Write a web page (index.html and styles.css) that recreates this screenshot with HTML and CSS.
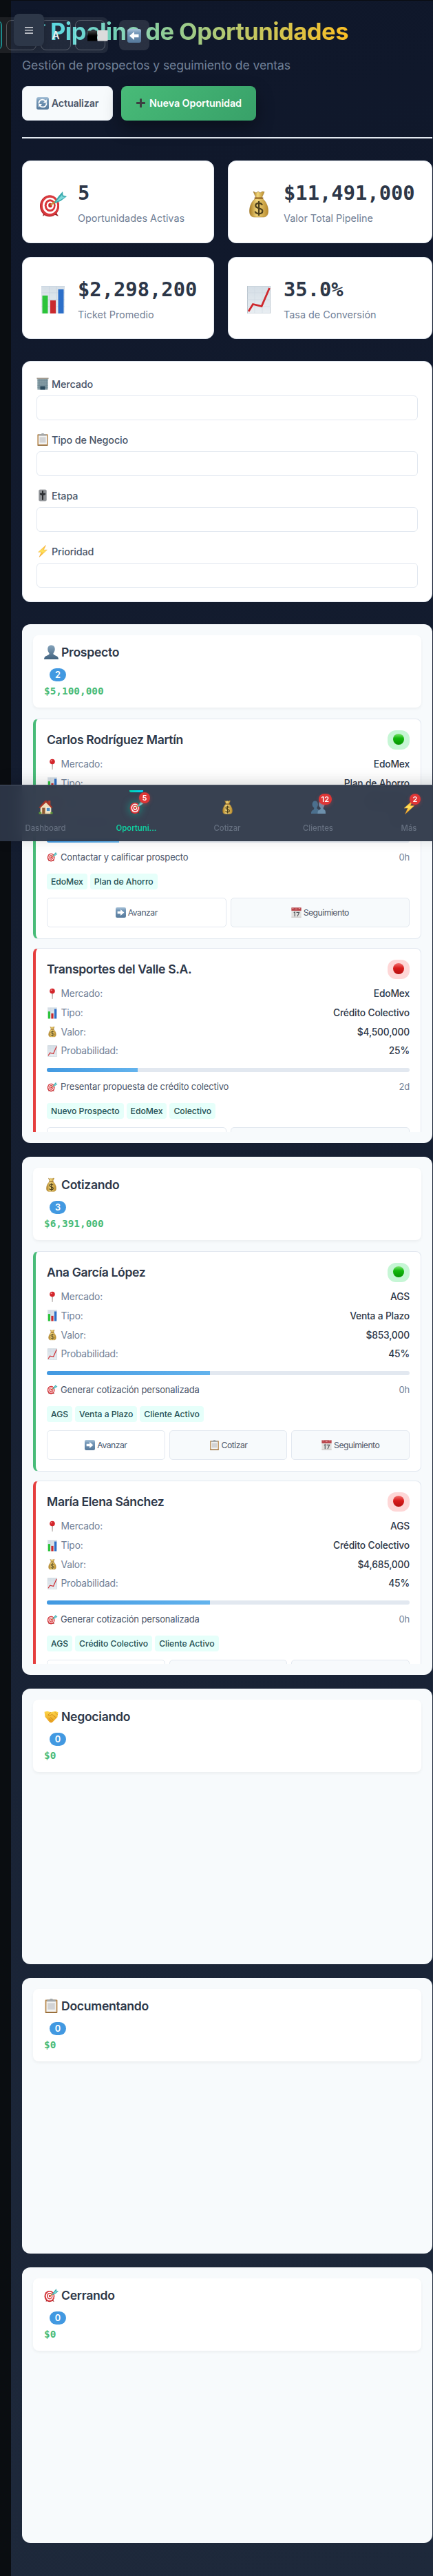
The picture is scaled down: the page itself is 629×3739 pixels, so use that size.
FILE: index.html
```html
<!DOCTYPE html>
<html lang="es">
<head>
<meta charset="utf-8">
<title>Pipeline de Oportunidades</title>
<link rel="stylesheet" href="styles.css">
</head>
<body>
<svg width="0" height="0" class="defs" aria-hidden="true">
  <defs>
    <linearGradient id="g-gold" x1="0" x2="1"><stop offset="0" stop-color="#a87b22"/><stop offset=".4" stop-color="#f3d77c"/><stop offset="1" stop-color="#b88a2c"/></linearGradient>
    <linearGradient id="g-key" x1="0" y1="0" x2="0" y2="1"><stop offset="0" stop-color="#a9c3d9"/><stop offset=".3" stop-color="#7598b8"/><stop offset="1" stop-color="#56799b"/></linearGradient>
    <linearGradient id="g-man" x1="0" y1="0" x2="0" y2="1"><stop offset="0" stop-color="#85a3bb"/><stop offset="1" stop-color="#41627f"/></linearGradient>
    <linearGradient id="g-paper" x1="0" y1="0" x2="0" y2="1"><stop offset="0" stop-color="#d5dee6"/><stop offset="1" stop-color="#e9eef2"/></linearGradient>
    <linearGradient id="g-bolt" x1="0" y1="0" x2="0" y2="1"><stop offset="0" stop-color="#ffb11f"/><stop offset=".5" stop-color="#ffe55c"/><stop offset="1" stop-color="#f79a1c"/></linearGradient>
    <linearGradient id="g-hand" x1="0" y1="0" x2="0" y2="1"><stop offset="0" stop-color="#ffd84a"/><stop offset="1" stop-color="#e69c1b"/></linearGradient>
    <linearGradient id="g-black" x1="0" y1="0" x2="0" y2="1"><stop offset="0" stop-color="#444"/><stop offset=".5" stop-color="#000"/></linearGradient>
  </defs>
  <symbol id="target" viewBox="0 0 40 40">
    <path d="M7 31l-2 7 6-4zM25 33l3 5-7-3z" fill="#8f1d20"/>
    <ellipse cx="15" cy="23" rx="14" ry="15.5" fill="#b3242a"/><ellipse cx="15.5" cy="22.5" rx="13.5" ry="15" fill="#da3a3e"/>
    <ellipse cx="15.5" cy="22.5" rx="10.6" ry="11.8" fill="#fff"/><ellipse cx="15.7" cy="22.3" rx="8" ry="9" fill="#d9363b"/>
    <ellipse cx="15.9" cy="22.2" rx="5.2" ry="6" fill="#fff"/><ellipse cx="16" cy="22" rx="2.8" ry="3.3" fill="#c9282e"/>
    <path d="M16.500 22L25 15" stroke="#c79a34" stroke-width="2.200"/>
    <path d="M22 18l5.500-8.500L34 2l.6 5.400L40 9l-8.500 6.500-8 3.500z" fill="#3aa9ad"/><path d="M24 17l9-10 .8 2.500 4.200.3-8 4.700z" fill="#7fdadb"/>
  </symbol>
  <symbol id="bag" viewBox="0 0 40 40">
    <path d="M12 2l4 2 3-2 3 2 3-2 3 .5-4 9h-8z" fill="url(#g-gold)" stroke="#9b732a" stroke-width=".6"/>
    <path d="M15 12h10c5 4 8.500 11 8.500 18 0 6-2 8.500-6.500 9H13c-4.500-.5-6.500-3-6.500-9 0-7 3.500-14 8.500-18z" fill="url(#g-gold)" stroke="#a57c2a" stroke-width=".6"/>
    <path d="M14.500 11.500h11" stroke="#8a5a1d" stroke-width="2.200" stroke-linecap="round"/>
    <path d="M25 21.500c-1-2-2.700-2.700-5-2.700-2.800 0-4.700 1.500-4.700 3.800 0 5 10 2.600 10 7.600 0 2.500-2.200 4-5.200 4-2.800 0-4.800-1.200-5.500-3.300M20 16v21" fill="none" stroke="#4d401c" stroke-width="2.300"/>
  </symbol>
  <symbol id="chart" viewBox="0 0 40 40">
    <rect x="3" width="34" height="40" fill="url(#g-paper)"/><path d="M3 .5h34M14.500 0v40M25.500 0v40M3 10h34M3 20h34M3 30h34" stroke="#c6d3df" stroke-width=".7"/>
    <rect x="4.500" y="14" width="8" height="26" fill="#2cc43b"/><rect x="16" y="21" width="8" height="19" fill="#c9292d"/><rect x="27.500" y="5" width="8" height="35" fill="#2c6fc9"/>
  </symbol>
  <symbol id="trend" viewBox="0 0 40 40">
    <rect x="3" width="34" height="40" fill="url(#g-paper)"/><path d="M3.500 0v40h33V0z" fill="none" stroke="#bcc7d0"/><path d="M14 0v40M25 0v40M3 10h34M3 20h34M3 30h34" stroke="#cdd8e1" stroke-width=".6"/>
    <path d="M5 37l6.500-10.500L24 29.500 35.500 3" fill="none" stroke="#ce282d" stroke-width="2.800"/>
  </symbol>
  <symbol id="building" viewBox="0 0 40 40">
    <rect x="3" y="3" width="34" height="36" fill="#8da3ab"/><rect x="1" y="1" width="38" height="4" fill="#9d968b"/>
    <path d="M3 9.500h34M3 15h34M3 20.500h34M3 26h34M3 31.500h34M9 5v34M15 5v34M21 5v34M27 5v34M33 5v34" stroke="#66828f" stroke-width="1.400"/>
    <rect x="12" y="28" width="16" height="11" fill="#2d4b5e"/>
  </symbol>
  <symbol id="clipboard" viewBox="0 0 40 40">
    <rect x="3" y="3" width="34" height="37" rx="2" fill="#b88b52"/><rect x="6.500" y="7" width="27" height="29" fill="#f3f3f2"/><rect x="10" y="12" width="20" height="18" fill="#d2d3d5"/>
    <path d="M8 3h7c0-4 10-4 10 0h7v5H8z" fill="#a4a8aa"/><path d="M4 38.500h32" stroke="#815a2c" stroke-width="2"/>
  </symbol>
  <symbol id="slider" viewBox="0 0 40 40">
    <rect x="7" y="1" width="26" height="38" rx="5" fill="#a1a4a8"/><rect x="9" y="3" width="22" height="34" rx="3" fill="#8d9094"/>
    <path d="M20 5v30" stroke="#1d1f22" stroke-width="4"/><path d="M11 13h18v4l-5 3h-8l-5-3z" fill="#2d3034"/>
  </symbol>
  <symbol id="bolt" viewBox="0 0 40 40"><path d="M30 1L6 23h10l-7 16 25-23H23z" fill="url(#g-bolt)" stroke="#eda128" stroke-width="1"/></symbol>
  <symbol id="person" viewBox="0 0 40 40"><path d="M20 1c6 0 10 4 10 11 0 6-3 9-4.500 12 0 3 2 4 6 5.500 5 2 8 4 8.500 10.500H0c.5-6.500 3.500-8.500 8.500-10.500 4-1.500 6-2.500 6-5.500C13 21 10 18 10 12 10 5 14 1 20 1z" fill="url(#g-man)"/></symbol>
  <symbol id="people" viewBox="0 0 40 40">
    <path d="M11 3c5 0 8 4 8 9.500 0 5-2 7.500-3.500 9.500 0 3 5 4 7 7l1 9H0c0-8 3-9 6.500-11 1-.7 2-2 1.500-5C5 20 3 17 3 12.500 3 7 6 3 11 3z" fill="#4b6f8d"/>
    <path d="M29 3c5 0 8 4 8 9.500 0 5-2 7.500-3.500 9.500 0 3 1 4 3 5 3 1.500 3.500 4 3.500 11H18c0-8 2-9.500 5.500-11 2-1 3-2 2.500-5-3-2-5-5-5-9.500C21 7 24 3 29 3z" fill="#6d90ac"/>
  </symbol>
  <symbol id="pin" viewBox="0 0 40 40"><path d="M18.500 16h3.500l-.8 23h-2z" fill="#9a8f8c"/><circle cx="20" cy="10" r="9.500" fill="#d3252b"/><ellipse cx="17" cy="7" rx="3" ry="2.500" fill="#f08a8a"/></symbol>
  <symbol id="key-right" viewBox="0 0 40 40"><rect width="40" height="40" rx="6" fill="url(#g-key)"/><path d="M7 15.500h12V8l14 12-14 12v-7.500H7z" fill="#fff"/></symbol>
  <symbol id="key-left" viewBox="0 0 40 40"><rect width="40" height="40" rx="6" fill="url(#g-key)"/><path d="M33 15.500H20V8L6 20l14 12v-7.500h13z" fill="#fff"/></symbol>
  <symbol id="refresh" viewBox="0 0 40 40"><rect width="40" height="40" rx="6" fill="url(#g-key)"/><path d="M8 21C7 13 13 8 19 8c5 0 8 2 10 5M32 19c1 8-5 13-11 13-5 0-8-2-10-5" fill="none" stroke="#fff" stroke-width="4"/><path d="M33 7v11H22zM7 33V22h11z" fill="#fff"/></symbol>
  <symbol id="plus" viewBox="0 0 40 40"><path d="M16 3h8v13h13v8H24v13h-8V24H3v-8h13z" fill="#3d3f42"/></symbol>
  <symbol id="calendar" viewBox="0 0 40 40"><rect x="1" y="1" width="38" height="38" fill="#e2e1df"/><path d="M1 1h38v12H1z" fill="#b9444a"/><path d="M4 4h5M16 6h7M29 4h6" stroke="#e3a0a2" stroke-width="3"/><path d="M10 21l4-3v17M20 19.500h11L24 35" fill="none" stroke="#54585c" stroke-width="3.200"/><path d="M1 38h38" stroke="#bdbab6" stroke-width="2"/></symbol>
  <symbol id="handshake" viewBox="0 0 40 40"><path d="M1 7l8-2 10 3 12-3 8 3-2 14-12 12c-3 4-7 4-10 1L3 21z" fill="url(#g-hand)"/><path d="M19 8l-8 8c4 3 8 0 11-2l11 9M17 22l8 7M13 25l7 7M30 8l7 7" fill="none" stroke="#c57d16" stroke-width="1.500"/></symbol>
  <symbol id="house" viewBox="0 0 40 40">
    <rect x="27" y="2" width="6" height="12" fill="#b5402f"/><path d="M5 18L20 4l15 14v20H5z" fill="#f0dfbb"/><path d="M1 21L18 2h5l16 19-3 2L20.500 7 4 23z" fill="#a63527"/>
    <rect x="10" y="22" width="8" height="16" fill="#8d5832"/><rect x="22" y="22" width="10" height="9" fill="#4a8fc2" stroke="#fff"/><path d="M1 34h7v5H1zM33 34h6v5h-6z" fill="#5a9a35"/><path d="M4 39h32" stroke="#7d6c55" stroke-width="2"/>
  </symbol>
</svg>

<main class="page">
  <header class="page-header">
    <h1><svg class="i"><use href="#target"/></svg><span>Pipeline de Oportunidades</span></h1>
    <p>Gestión de prospectos y seguimiento de ventas</p>
    <div class="actions">
      <button class="btn light"><svg class="i"><use href="#refresh"/></svg><span>Actualizar</span></button>
      <button class="btn green"><svg class="i"><use href="#plus"/></svg><span>Nueva Oportunidad</span></button>
    </div>
  </header>

  <section class="stats">
    <div class="stat"><svg class="i"><use href="#target"/></svg><div><b>5</b><small>Oportunidades Activas</small></div></div>
    <div class="stat"><svg class="i"><use href="#bag"/></svg><div><b>$11,491,000</b><small>Valor Total Pipeline</small></div></div>
    <div class="stat"><svg class="i"><use href="#chart"/></svg><div><b>$2,298,200</b><small>Ticket Promedio</small></div></div>
    <div class="stat"><svg class="i"><use href="#trend"/></svg><div><b>35.0%</b><small>Tasa de Conversión</small></div></div>
  </section>

  <section class="filters">
    <div class="field"><label><svg class="i"><use href="#building"/></svg>Mercado</label><div class="select"></div></div>
    <div class="field"><label><svg class="i"><use href="#clipboard"/></svg>Tipo de Negocio</label><div class="select"></div></div>
    <div class="field"><label><svg class="i"><use href="#slider"/></svg>Etapa</label><div class="select"></div></div>
    <div class="field"><label><svg class="i"><use href="#bolt"/></svg>Prioridad</label><div class="select"></div></div>
  </section>

  <section class="board">
    <div class="column full">
      <div class="column-head"><h3><svg class="i"><use href="#person"/></svg>Prospecto</h3><span class="count">2</span><div class="amount">$5,100,000</div></div>
      <div class="list">
        <article class="opp low">
          <div class="opp-head"><h4>Carlos Rodríguez Martín</h4><span class="pill"><i></i></span></div>
          <dl>
            <div><dt><svg class="i"><use href="#pin"/></svg>Mercado:</dt><dd>EdoMex</dd></div>
            <div><dt><svg class="i"><use href="#chart"/></svg>Tipo:</dt><dd>Plan de Ahorro</dd></div>
            <div><dt><svg class="i"><use href="#bag"/></svg>Valor:</dt><dd>$600,000</dd></div>
            <div><dt><svg class="i"><use href="#trend"/></svg>Probabilidad:</dt><dd>20%</dd></div>
          </dl>
          <div class="bar"><div style="width:20%"></div></div>
          <div class="next"><span><svg class="i"><use href="#target"/></svg>Contactar y calificar prospecto</span><time>0h</time></div>
          <div class="tags"><span>EdoMex</span><span>Plan de Ahorro</span></div>
          <div class="opp-actions"><button><svg class="i"><use href="#key-right"/></svg>Avanzar</button><button><svg class="i"><use href="#calendar"/></svg>Seguimiento</button></div>
        </article>
        <article class="opp high">
          <div class="opp-head"><h4>Transportes del Valle S.A.</h4><span class="pill"><i></i></span></div>
          <dl>
            <div><dt><svg class="i"><use href="#pin"/></svg>Mercado:</dt><dd>EdoMex</dd></div>
            <div><dt><svg class="i"><use href="#chart"/></svg>Tipo:</dt><dd>Crédito Colectivo</dd></div>
            <div><dt><svg class="i"><use href="#bag"/></svg>Valor:</dt><dd>$4,500,000</dd></div>
            <div><dt><svg class="i"><use href="#trend"/></svg>Probabilidad:</dt><dd>25%</dd></div>
          </dl>
          <div class="bar"><div style="width:25%"></div></div>
          <div class="next"><span><svg class="i"><use href="#target"/></svg>Presentar propuesta de crédito colectivo</span><time>2d</time></div>
          <div class="tags"><span>Nuevo Prospecto</span><span>EdoMex</span><span>Colectivo</span></div>
          <div class="opp-actions"><button></button><button></button></div>
        </article>
      </div>
    </div>

    <div class="column full second">
      <div class="column-head"><h3><svg class="i"><use href="#bag"/></svg>Cotizando</h3><span class="count">3</span><div class="amount">$6,391,000</div></div>
      <div class="list">
        <article class="opp low">
          <div class="opp-head"><h4>Ana García López</h4><span class="pill"><i></i></span></div>
          <dl>
            <div><dt><svg class="i"><use href="#pin"/></svg>Mercado:</dt><dd>AGS</dd></div>
            <div><dt><svg class="i"><use href="#chart"/></svg>Tipo:</dt><dd>Venta a Plazo</dd></div>
            <div><dt><svg class="i"><use href="#bag"/></svg>Valor:</dt><dd>$853,000</dd></div>
            <div><dt><svg class="i"><use href="#trend"/></svg>Probabilidad:</dt><dd>45%</dd></div>
          </dl>
          <div class="bar"><div style="width:45%"></div></div>
          <div class="next"><span><svg class="i"><use href="#target"/></svg>Generar cotización personalizada</span><time>0h</time></div>
          <div class="tags"><span>AGS</span><span>Venta a Plazo</span><span>Cliente Activo</span></div>
          <div class="opp-actions"><button><svg class="i"><use href="#key-right"/></svg>Avanzar</button><button><svg class="i"><use href="#clipboard"/></svg>Cotizar</button><button><svg class="i"><use href="#calendar"/></svg>Seguimiento</button></div>
        </article>
        <article class="opp high">
          <div class="opp-head"><h4>María Elena Sánchez</h4><span class="pill"><i></i></span></div>
          <dl>
            <div><dt><svg class="i"><use href="#pin"/></svg>Mercado:</dt><dd>AGS</dd></div>
            <div><dt><svg class="i"><use href="#chart"/></svg>Tipo:</dt><dd>Crédito Colectivo</dd></div>
            <div><dt><svg class="i"><use href="#bag"/></svg>Valor:</dt><dd>$4,685,000</dd></div>
            <div><dt><svg class="i"><use href="#trend"/></svg>Probabilidad:</dt><dd>45%</dd></div>
          </dl>
          <div class="bar"><div style="width:45%"></div></div>
          <div class="next"><span><svg class="i"><use href="#target"/></svg>Generar cotización personalizada</span><time>0h</time></div>
          <div class="tags"><span>AGS</span><span>Crédito Colectivo</span><span>Cliente Activo</span></div>
          <div class="opp-actions"><button></button><button></button><button></button></div>
        </article>
      </div>
    </div>

    <div class="column"><div class="column-head"><h3><svg class="i"><use href="#handshake"/></svg>Negociando</h3><span class="count">0</span><div class="amount">$0</div></div></div>
    <div class="column"><div class="column-head"><h3><svg class="i"><use href="#clipboard"/></svg>Documentando</h3><span class="count">0</span><div class="amount">$0</div></div></div>
    <div class="column"><div class="column-head"><h3><svg class="i"><use href="#target"/></svg>Cerrando</h3><span class="count">0</span><div class="amount">$0</div></div></div>
  </section>
</main>

<div class="toolbar">
  <span class="tool active"></span><span class="tool"></span><span class="tool">A</span>
  <span class="tool"><svg class="contrast" viewBox="0 0 30 16"><rect width="14" height="15" y=".5" fill="url(#g-black)"/><rect x="14.500" y="0" width="15" height="15.500" rx="1" fill="#dcdcdc"/></svg></span>
</div>
<button class="back"><svg class="i"><use href="#key-left"/></svg></button>
<button class="menu"><svg viewBox="0 0 12 10"><path d="M0 .8h12M0 5h12M0 9.200h12" stroke="#fff" stroke-width="1.200"/></svg></button>

<nav class="tabs">
  <a><svg class="i"><use href="#house"/></svg><span>Dashboard</span></a>
  <a class="on"><svg class="i"><use href="#target"/></svg><em class="up">5</em><span>Oportuni...</span></a>
  <a><svg class="i"><use href="#bag"/></svg><span>Cotizar</span></a>
  <a><svg class="i"><use href="#people"/></svg><em>12</em><span>Clientes</span></a>
  <a><svg class="i"><use href="#bolt"/></svg><em>2</em><span>Más</span></a>
</nav>
</body>
</html>
```
FILE: styles.css
```css
* { box-sizing: border-box; }
body { margin: 0; position: relative; width: 629px; height: 3739px; overflow: hidden; background: #0a0d11; font-family: Inter, "Liberation Sans", sans-serif; color: #2d3748; }
h1, h3, h4, p, dl, dd { margin: 0; }
button { font-family: inherit; border: 0; padding: 0; margin: 0; }
.defs { position: absolute; }
.i { display: block; flex: none; }
.page { margin: 0 0 0 16px; border-top: 1px solid #0a0d11; height: 3739px; padding: 23px 1px 0 16px; background: linear-gradient(170deg, #0f172a, #1e293b); }

.page-header { border-bottom: 2px solid #e2e8f0; padding-bottom: 24px; margin-bottom: 32px; }
.page-header h1 { display: flex; align-items: center; gap: 6px; font-size: 34.600px; line-height: 42px; font-weight: 700; letter-spacing: -.560px; }
.page-header h1 .i { width: 35px; height: 35px; }
.page-header h1 span { background: linear-gradient(90deg, #4dd5df, #fbbf24); -webkit-background-clip: text; background-clip: text; color: transparent; white-space: nowrap; }
.page-header p { margin-top: 14.600px; font-size: 17.600px; line-height: 28px; color: #718096; letter-spacing: -.12px; }
.actions { display: flex; gap: 12px; margin-top: 16.400px; }
.btn { height: 50px; border-radius: 8px; display: flex; align-items: center; justify-content: center; gap: 4px; font-size: 14.400px; font-weight: 600; white-space: nowrap; letter-spacing: -.2px; }
.btn .i { width: 18px; height: 18px; }
.light { width: 132px; background: #f7fafc; color: #4a5568; border: 1px solid #e2e8f0; }
.green { width: 196px; gap: 5px; letter-spacing: -.1px; background: linear-gradient(135deg, #48bb78, #38a169); color: #fff; box-shadow: 0 10px 25px rgba(0, 0, 0, .35); }
.green .i { width: 15px; height: 15px; }

.stats { display: grid; grid-template-columns: 279px 297px; grid-template-rows: 120px 119px; gap: 20px; margin-bottom: 32px; }
.stat { background: #fff; border: 1px solid #e2e8f0; border-radius: 12px; padding: 6px 24px 0; display: flex; align-items: center; gap: 16px; }
.stat .i { width: 40px; height: 40px; }
.stat b { display: block; font: 700 28.800px/35px "DejaVu Sans Mono", monospace; }
.stat small { display: block; margin-top: 7px; font-size: 14.400px; line-height: 23px; color: #718096; white-space: nowrap; }

.filters { height: 350px; background: #fff; border: 1px solid #e2e8f0; border-radius: 12px; padding: 21px 20px; display: flex; flex-direction: column; gap: 22px; margin-bottom: 32px; }
.field { height: 59px; }
.field label { display: flex; align-items: center; gap: 4px; height: 23px; margin-bottom: 5px; font-size: 14.400px; font-weight: 500; letter-spacing: -.14px; color: #4a5568; }
.field label .i { width: 18px; height: 18px; }
.select { height: 36px; border: 1px solid #e2e8f0; border-radius: 6px; background: #fff; }

.board { display: flex; flex-direction: column; gap: 20px; }
.column { height: 400px; padding: 16px; background: #f7fafc; border-radius: 12px; display: flex; flex-direction: column; }
.column.full { height: 753px; }
.column.full.second { height: 752px; }
.column-head { height: 105px; flex: none; background: #fff; border-radius: 8px; padding: 15px 16px 0; box-shadow: 0 2px 4px rgba(0, 0, 0, .05); }
.column-head h3 { display: flex; align-items: center; gap: 4px; font-size: 17.600px; line-height: 20px; height: 20px; font-weight: 600; letter-spacing: -.28px; }
.column-head h3 .i { width: 21px; height: 21px; }
.count { display: flex; align-items: center; justify-content: center; width: 24px; height: 19px; margin: 13px 0 0 8px; border-radius: 10px; background: #4299e1; color: #fff; font-size: 12.800px; font-weight: 600; }
.amount { margin-top: 3px; font: 700 14.400px/22px "DejaVu Sans Mono", monospace; color: #48bb78; }
.list { margin-top: 16px; flex: 1; min-height: 0; overflow: hidden; }

.opp { height: 320.400px; margin-bottom: 12.800px; background: #fff; border: 1px solid #e2e8f0; border-left: 4px solid #48bb78; border-radius: 8px; padding: 16px; }
.opp.high { border-left-color: #e53e3e; }
.opp-head { display: flex; justify-content: space-between; height: 28px; }
.opp h4 { font-size: 17.600px; line-height: 27px; font-weight: 600; letter-spacing: -.35px; }
.pill { width: 32px; height: 28px; border-radius: 12px; background: #c6f6d5; display: flex; justify-content: center; padding-top: 5px; }
.pill i { width: 16px; height: 16px; border-radius: 50%; background: linear-gradient(#7be36f, #12b80c 40%, #079404); }
.high .pill { background: #fed7d7; }
.high .pill i { background: linear-gradient(#f0706e, #d91b1b 45%, #b51212); }
.opp dl { margin-top: 10.300px; display: flex; flex-direction: column; gap: 4.670px; }
.opp dl > div { display: flex; justify-content: space-between; height: 23px; line-height: 23px; font-size: 13.800px; }
.opp dt { display: flex; align-items: center; gap: 4.500px; color: #718096; letter-spacing: -.19px; }
.opp dt .i { width: 16px; height: 17px; margin-top: -1px; }
.opp dd { font-weight: 500; letter-spacing: -.18px; }
.bar { height: 6px; margin-top: 12.400px; background: #e2e8f0; border-radius: 3px; overflow: hidden; }
.bar div { height: 6px; background: linear-gradient(90deg, #4299e1, #63b3ed); }
.next { display: flex; justify-content: space-between; margin-top: 10.300px; height: 22px; line-height: 22px; font-size: 13px; letter-spacing: -.14px; color: #4a5568; }
.next span { display: flex; align-items: center; gap: 4px; }
.next .i { width: 16px; height: 15px; }
.next time { color: #718096; }
.tags { display: flex; gap: 4px; margin-top: 12.700px; }
.tags span { height: 23.300px; line-height: 23px; padding: 0 6px; border-radius: 4px; background: #e6fffa; color: #234e52; font-size: 12.200px; font-weight: 500; letter-spacing: -.04px; white-space: nowrap; }
.opp-actions { display: flex; gap: 6px; margin-top: 11.700px; }
.opp-actions button { flex: 1; height: 43.700px; display: flex; align-items: center; justify-content: center; gap: 3px; border: 1px solid #e2e8f0; border-radius: 5px; background: #f7fafc; color: #4a5568; font-size: 12.200px; letter-spacing: -.5px; }
.opp-actions button:first-child { background: #fff; }
.opp-actions .i { width: 15px; height: 15px; }

.toolbar { position: absolute; top: 25px; left: -45px; width: 201.500px; height: 52px; padding: 4px; display: flex; gap: 6px; background: rgba(255, 255, 255, .08); border-radius: 8px; }
.tool { width: 44px; height: 44px; flex: none; border: 1px solid rgba(255, 255, 255, .25); border-radius: 8px; display: flex; align-items: center; justify-content: center; color: #eee; font-size: 16px; font-weight: 500; }
.tool.active { border-color: #1fb5b5; background: rgba(0, 180, 180, .15); }
.tool .contrast { width: 30px; height: 16px; flex: none; margin-left: 22px; margin-top: 2px; }
.back { position: absolute; left: 173px; top: 29px; width: 44px; height: 44px; border-radius: 8px; background: rgba(255, 255, 255, .11); display: flex; align-items: center; justify-content: center; }
.back .i { width: 20px; height: 20px; margin-top: 2px; }
.menu { position: absolute; left: 20px; top: 20px; width: 44px; height: 47px; border-radius: 8px; background: #2d3748; display: flex; align-items: center; justify-content: center; box-shadow: 0 4px 12px rgba(0, 0, 0, .15); }
.menu svg { width: 12px; height: 10px; }

.tabs { position: absolute; left: 0; top: 1139px; width: 660px; height: 82px; background: rgba(45, 55, 72, .95); border-top: 1px solid #4a5364; box-shadow: 0 -4px 20px rgba(0, 0, 0, .15); -webkit-backdrop-filter: blur(10px); backdrop-filter: blur(10px); display: grid; grid-template-columns: repeat(5, 132px); }
.tabs a { position: relative; display: flex; flex-direction: column; align-items: center; padding-top: 21px; font-size: 11.300px; font-weight: 500; color: #667080; }
.tabs .i { width: 21px; height: 21px; }
.tabs span { margin-top: 13px; line-height: 15px; }
.tabs em { position: absolute; left: 67px; top: 12px; min-width: 16px; height: 16px; padding: 0 3.500px; border-radius: 8px; background: #e03636; color: #fff; font: 600 11px/16px Inter, sans-serif; text-align: center; box-shadow: 0 2px 5px rgba(229, 62, 62, .35); }
.tabs em.up { top: 10px; left: 70px; }
.tabs .on { color: #10cf9f; font-weight: 600; }
.tabs .on::before { content: ""; position: absolute; top: 7px; left: 56px; width: 20px; height: 3px; background: linear-gradient(90deg, #00d4aa, #00d4ff); border-radius: 0 0 2px 2px; }
.tabs .on .i { filter: drop-shadow(0 0 6px rgba(0, 212, 170, .6)); }
```
